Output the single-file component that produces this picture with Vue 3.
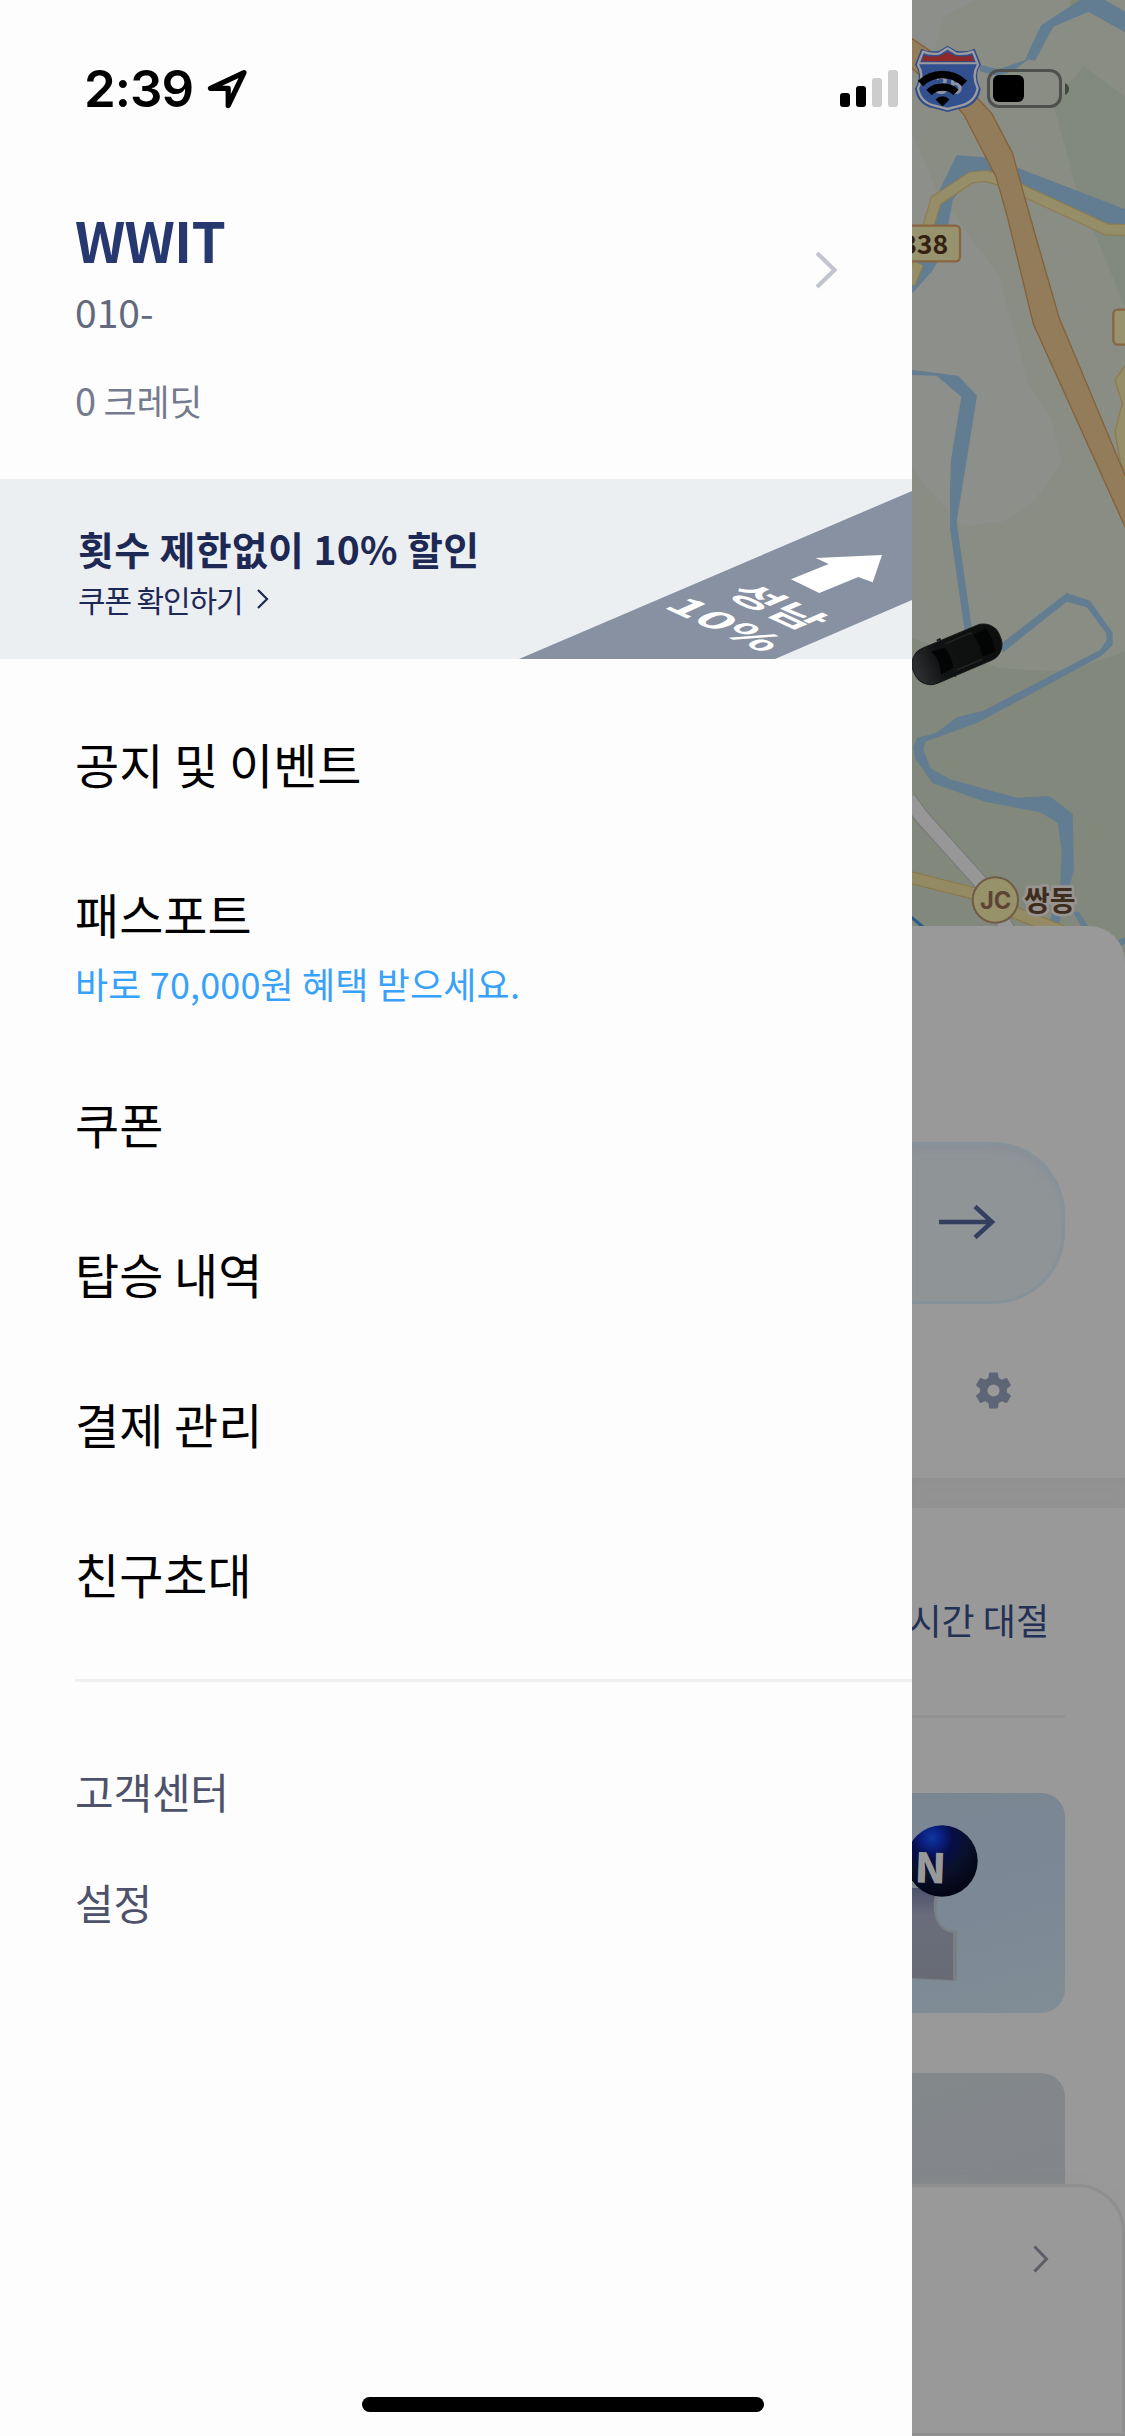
<script setup>
const menu = [
  { label: '공지 및 이벤트' },
  { label: '패스포트', note: '바로 70,000원 혜택 받으세요.' },
  { label: '쿠폰' },
  { label: '탑승 내역' },
  { label: '결제 관리' },
  { label: '친구초대' },
]
const support = ['고객센터', '설정']
const signal = [
  { h: 14, on: true },
  { h: 21, on: true },
  { h: 29, on: false },
  { h: 37, on: false },
]
</script>

<template>
  <div class="screen">
    <aside class="drawer">
      <header class="profile">
        <div class="who">
          <h1>WWIT</h1>
          <p class="phone">010-</p>
          <p class="credit"><span>0</span> 크레딧</p>
        </div>
        <svg class="go" width="26" height="40" viewBox="0 0 26 40" fill="none">
          <path d="M3 3 20.500 20 3 37" stroke="#c2c5cf" stroke-width="4.200" />
        </svg>
      </header>

      <section class="banner">
        <div class="banner-copy">
          <strong>횟수 제한없이 10% 할인</strong>
          <div class="banner-link">
            <span>쿠폰 확인하기</span>
            <svg width="14" height="22" viewBox="0 0 14 22" fill="none">
              <path d="M2 2 11 11 2 20" stroke="#1e2855" stroke-width="2.200" />
            </svg>
          </div>
        </div>
        <svg class="road" width="393" height="180" viewBox="519 0 393 180">
          <polygon points="519,180 912,12 912,121 775,180" fill="#8791a2" />
          <polygon points="815.7,79 882,76 872.7,103.3 858.3,98 819.3,114 791,100.300 828.700,85" fill="#fff" />
          <text class="road-text" font-size="38" transform="matrix(1.16 .54 -.96 .42 723 115)">성남</text>
          <text class="road-text" font-size="38" transform="matrix(1.25 .57 -.91 .42 662 128)">10%</text>
        </svg>
      </section>

      <nav class="menu">
        <div v-for="item in menu" :key="item.label" class="menu-item">
          <span class="label">{{ item.label }}</span>
          <span v-if="item.note" class="note">{{ item.note }}</span>
        </div>
      </nav>
      <nav class="support">
        <span v-for="s in support" :key="s">{{ s }}</span>
      </nav>
    </aside>

    <main class="behind">
      <svg class="map" width="213" height="962" viewBox="396 0 639 2886">
        <defs>
          <linearGradient id="car" x1="0" x2="1" y1="0" y2="0">
            <stop offset="0" stop-color="#303133" />
            <stop offset=".3" stop-color="#101213" />
            <stop offset="1" stop-color="#0c0e0d" />
          </linearGradient>
        </defs>
        <rect x="396" width="639" height="2886" fill="#898d84" />
        <path d="M396 0H590L490 50 465 150 396 160Z" fill="#8d8f8a" />
        <path d="M396 400 470 570 520 640 655 825 710 1020 745 1150 815 1260 845 1385 765 1500 670 1565 550 1578 430 1450 396 1400Z" fill="#8d8f8a" />
        <path d="M910 198 1035 290V920L890 570 820 310Z" fill="#82897d" />
        <path d="M870 0H910L900 18 870 25Z" fill="#7e8a71" />
        <path d="M396 1915 660 2005 860 2015 1035 1955V2886H396Z" fill="#82887b" />

        <g fill="#627d91">
          <path d="M900 0H975L1035 35V97L925 35 820 80 765 182 745 178 700 212 655 228 600 214V194L655 208 735 180 783 76Z" />
          <path d="M530 466 620 472 650 525 575 525 518 600 505 672 470 790 455 815 397 880V810L465 672 480 568Z" />
          <path d="M712 503 1035 628V680H980L722 560Z" />
          <path d="M396 1110 535 1127 591 1187 530 1565 576 1890 555 1900 510 1585 510 1460 513 1380 544 1190 470 1127 396 1125Z" />
          <path d="M665 1930 860 1779 930 1802 998 1898V1935L965 1967 590 2170 435 2225 430 2250 452 2305 510 2338 710 2393 808 2388 878 2442 882 2610 865 2670 832 2790H800L840 2670 845 2550 833 2468 780 2437 615 2405 458 2350 405 2275 400 2240 412 2213 470 2198 530 2152 610 2132 960 1950 980 1920 978 1898 920 1822 860 1805 668 1958Z" />
          <path d="M878 2735H897L925 2780H905Z" />
          <path d="M1010 2822 1035 2812V2832L1020 2836Z" />
        </g>

        <g fill="none">
          <path d="M390 850 415 790M445 680 468 602 574 532 620 528 690 550 735 575 980 688 1040 690" stroke="#8e7c4f" stroke-width="36" />
          <path d="M390 850 415 790M445 680 468 602 574 532 620 528 690 550 735 575 980 688 1040 690" stroke="#968e69" stroke-width="29" />
        </g>
        <path d="M1040 1090 1005 1140 1027 1210 1005 1295 1022 1390 1040 1420Z" fill="#968e69" stroke="#8e7c4f" stroke-width="4" />
        <path d="M390 112 450 152 590 292 635 340 697 458 725 560 770 720 838 955 1020 1390 1045 1450V1600L1035 1580 760 972 682 650 657 562 648 530 552 345 535 325 390 200Z" fill="#927c5a" stroke="#85613a" stroke-width="4" />

        <g fill="none" stroke-linejoin="round">
          <path d="M390 2632 580 2680 710 2740 850 2795" stroke="#8b7949" stroke-width="38" />
          <path d="M390 2632 580 2680 710 2740 850 2795" stroke="#948b64" stroke-width="31" />
          <path d="M385 2395 425 2450 600 2645 690 2800" stroke="#78797a" stroke-width="46" />
          <path d="M385 2395 425 2450 600 2645 690 2800" stroke="#979797" stroke-width="40" />
          <path d="M390 2748 440 2790" stroke="#2a5c87" stroke-width="9" />
        </g>

        <g stroke="#886640" stroke-width="7" fill="#98936f">
          <rect x="300" y="677" width="240" height="107" rx="13" />
          <rect x="1000" y="929" width="120" height="105" rx="13" />
        </g>
        <text x="505" y="763" class="map-text" font-size="80" text-anchor="end" fill="#352110">338</text>

        <circle cx="646" cy="2700" r="68" fill="#98926b" stroke="#725b46" stroke-width="6" />
        <text x="647" y="2726" class="map-text jc" font-size="71" text-anchor="middle" fill="#5c4533">JC</text>
        <text x="809" y="2734" class="map-text" font-size="84" text-anchor="middle" fill="#3e2c1d" stroke="#989491" stroke-width="16" stroke-linejoin="round" paint-order="stroke">쌍동</text>

        <!-- interstate shield -->
        <g stroke-linejoin="round">
          <path d="M503 137 528 152Q560 158 584 146L603 194Q580 224 602 266Q595 315 545 325L503 336 461 325Q412 315 405 266Q428 224 405 194L424 146Q446 158 478 152Z" fill="#324b8b" />
          <path d="M503 145 527 160Q555 165 579 155L594 194Q574 226 593 265Q585 307 542 317L503 327 464 317Q421 307 414 265Q434 226 414 194L429 155Q451 165 479 160Z" fill="#324f8e" stroke="#9b9ba0" stroke-width="7" />
          <path d="M432 166Q460 173 485 166L503 156 521 166Q546 173 575 166L581 184H426Z" fill="#8b292b" />
          <path d="M418 190H590" stroke="#9b9ba0" stroke-width="6" />
          <text x="506" y="282" class="map-text" font-size="72" text-anchor="middle" fill="#8d94a6">35</text>
        </g>

        <g transform="translate(531 1963) rotate(-23)">
          <path d="M-30-65V60M-40-62H-28" stroke="#111" stroke-width="5" />
          <rect x="-140" y="-57" width="280" height="114" rx="52" fill="url(#car)" stroke="#171819" stroke-width="3" />
          <path d="M-68-38Q-52 0-68 38L-25 32Q-18 0-25-32Z" fill="#030404" />
          <path d="M68-35Q76 0 68 35L108 38Q122 0 108-38Z" fill="#030404" />
          <path d="M-20-43H65M-20 43H65" stroke="#242726" stroke-width="4" />
        </g>
      </svg>

      <section class="sheet">
        <div class="pill">
          <svg width="58" height="36" viewBox="0 0 58 36" fill="none" stroke="#343f60" stroke-width="4.500">
            <path d="M0 18H54M36 2.500 53 18 36 33.500" />
          </svg>
        </div>
        <svg class="gear" width="43" height="43" viewBox="0 0 24 24" fill="#5e6577">
          <path d="M19.430 12.980c.04-.32.07-.64.07-.98s-.03-.66-.07-.98l2.110-1.650c.19-.15.24-.42.12-.64l-2-3.460c-.12-.22-.39-.3-.61-.22l-2.490 1c-.52-.4-1.080-.73-1.690-.98l-.38-2.650C14.460 2.180 14.250 2 14 2h-4c-.25 0-.46.18-.49.42l-.38 2.650c-.61.25-1.170.59-1.690.98l-2.490-1c-.23-.09-.49 0-.61.22l-2 3.460c-.13.22-.07.49.12.64l2.110 1.650c-.04.32-.07.65-.07.98s.03.66.07.98l-2.110 1.650c-.19.15-.24.42-.12.64l2 3.460c.12.22.39.3.61.22l2.490-1c.52.4 1.080.73 1.690.98l.38 2.650c.03.24.24.42.49.42h4c.25 0 .46-.18.49-.42l.38-2.650c.61-.25 1.170-.59 1.690-.98l2.490 1c.23.09.49 0 .61-.22l2-3.460c.12-.22.07-.49-.12-.64l-2.110-1.650zM12 15.400a3.400 3.400 0 1 1 0-6.800 3.400 3.400 0 0 1 0 6.800z" />
        </svg>
      </section>
      <div class="gap"></div>
      <section class="promos">
        <p class="tab">시간 대절</p>
        <div class="card">
          <svg width="153" height="220" viewBox="0 0 153 220">
            <defs>
              <radialGradient id="ball" cx=".36" cy=".17" r=".85">
                <stop offset="0" stop-color="#10389a" />
                <stop offset=".14" stop-color="#0b2488" />
                <stop offset=".34" stop-color="#060d49" />
                <stop offset=".6" stop-color="#0a112b" />
                <stop offset="1" stop-color="#020412" />
              </radialGradient>
              <linearGradient id="body" x1="0" x2="0" y1="0" y2="1">
                <stop offset="0" stop-color="#4c536c" />
                <stop offset=".3" stop-color="#696d7b" />
                <stop offset="1" stop-color="#686b75" />
              </linearGradient>
            </defs>
            <path d="M0 95H29C20 118 24 137 45 138V187L41 188 0 186Z" fill="#7b7e83" />
            <path d="M0 95H25C17 118 24 138 41 140V187L0 185Z" fill="url(#body)" />
            <circle cx="30" cy="68" r="35.700" fill="url(#ball)" />
            <text x="18.500" y="90" class="ball-n" font-size="41" text-anchor="middle" transform="rotate(2 18 75)">N</text>
          </svg>
        </div>
        <div class="card second"></div>
      </section>
      <section class="bottom">
        <svg width="18" height="30" viewBox="0 0 18 30" fill="none">
          <path d="M2.500 2.500 14.500 15 2.500 27.500" stroke="#5d5e69" stroke-width="3" />
        </svg>
      </section>
    </main>

    <div class="status">
      <span class="time">2:39</span>
      <svg class="loc" width="42" height="42" viewBox="206 69 42 42">
        <path d="M244 72.700 210.500 88.400H228.200V105.600Z" fill="none" stroke="#000" stroke-width="5.200" stroke-linejoin="round" />
      </svg>
      <div class="signal">
        <i v-for="b in signal" :key="b.h" :class="{ on: b.on }" :style="{ height: b.h + 'px' }"></i>
      </div>
      <svg class="wifi" width="52" height="38" viewBox="916 69 52 38" fill="none" stroke="#000" stroke-width="7.500">
        <path d="M920.500 83.500A31.500 31.500 0 0 1 964.500 83.500" />
        <path d="M929 92.500A19.500 19.500 0 0 1 956 92.500" />
        <path d="M935.500 99.500Q942.500 93 949.500 99.500L942.500 106.500Z" fill="#000" stroke="none" />
      </svg>
      <div class="battery"><b></b></div>
      <svg class="nub" width="5" height="12" viewBox="0 0 5 12"><path d="M0 0Q4 2 4 6T0 12Z" fill="#454644" /></svg>
    </div>
    <div class="home"></div>
  </div>
</template>

<style>
body {
  margin: 0;
}
</style>

<style scoped>
.screen {
  position: relative;
  display: flex;
  width: 1125px;
  height: 2436px;
  overflow: hidden;
  font-family: 'Noto Sans CJK KR', 'Noto Sans CJK SC', sans-serif;
  background: #999;
}
h1,
p {
  margin: 0;
}
.drawer {
  flex: none;
  width: 912px;
  background: #fdfdfd;
}
.profile {
  box-sizing: border-box;
  display: flex;
  justify-content: space-between;
  height: 479px;
  padding: 194px 72px 0 75px;
}
.who h1 {
  font-size: 55px;
  line-height: 90px;
  font-weight: 700;
  letter-spacing: -0.8px;
  color: #273871;
}
.phone {
  margin-top: -1px;
  font-size: 39px;
  line-height: 56px;
  color: #62697d;
}
.credit {
  margin-top: 33px;
  font-size: 36px;
  line-height: 56px;
  letter-spacing: -0.3px;
  color: #757b8e;
}
.credit span {
  font-size: 38px;
}
.go {
  margin-top: 56px;
}
.banner {
  display: flex;
  justify-content: space-between;
  height: 180px;
  background: #ebeff2;
}
.banner-copy {
  padding: 42px 0 0 78px;
  color: #1e2855;
}
.banner-copy strong {
  display: block;
  font-size: 39px;
  line-height: 54px;
  font-weight: 700;
  letter-spacing: 0.3px;
  white-space: nowrap;
}
.banner-link {
  display: flex;
  align-items: center;
  gap: 13px;
  margin-top: 1px;
  font-size: 30px;
  line-height: 46px;
  letter-spacing: -1.1px;
}
.road {
  flex: none;
}
.road-text {
  font-family: 'Noto Sans CJK KR', sans-serif;
  font-weight: 700;
  fill: #fff;
}
.menu {
  display: flex;
  flex-direction: column;
  gap: 80px;
  margin-left: 75px;
  padding: 69px 0 71px;
  border-bottom: 3px solid #f0f0f1;
}
.menu-item {
  display: flex;
  flex-direction: column;
}
.label {
  font-size: 48px;
  line-height: 70px;
  color: #000;
}
.note {
  padding-top: 10px;
  font-size: 36px;
  line-height: 50px;
  letter-spacing: 0.15px;
  color: #38a2fb;
}
.support {
  display: flex;
  flex-direction: column;
  gap: 51px;
  padding: 79px 0 0 75px;
  font-size: 42px;
  line-height: 60px;
  letter-spacing: -0.2px;
  color: #4d526a;
}
.behind {
  width: 213px;
  height: 2436px;
  overflow: hidden;
  display: flex;
  flex-direction: column;
  background: #999;
}
.behind > * {
  flex: none;
}
.map {
  display: block;
}
.map-text {
  font-family: 'Noto Sans CJK KR', sans-serif;
  font-weight: 700;
}
.jc {
  font-family: 'Inter', sans-serif;
}
.sheet {
  box-sizing: border-box;
  height: 552px;
  margin-top: -36px;
  padding-top: 216px;
  z-index: 1;
  background: #999;
  border-top-right-radius: 36px;
}
.pill {
  box-sizing: border-box;
  display: flex;
  align-items: center;
  width: 153px;
  height: 162px;
  padding: 0 0 3px 27px;
  border: 3px solid #86929a;
  border-left: 0;
  border-radius: 0 72px 72px 0;
  background: #8f9597;
  box-shadow: inset 0 9px 9px -3px #8a8f96;
}
.gear {
  display: block;
  margin: 65px 0 0 59.5px;
}
.gap {
  height: 30px;
  background: #939393;
  box-shadow: inset 0 2px 8px #8f8f8f;
}
.promos {
  display: flex;
  flex-direction: column;
  height: 676px;
  overflow: hidden;
}
.promos > * {
  flex: none;
}
.tab {
  width: 153px;
  box-sizing: border-box;
  display: flex;
  justify-content: flex-end;
  height: 210px;
  padding: 83px 16px 0 0;
  border-bottom: 3px solid #929292;
  font-size: 36px;
  line-height: 56px;
  white-space: nowrap;
  color: #243156;
}
.card {
  width: 153px;
  height: 220px;
  margin-top: 75px;
  border-radius: 0 24px 24px 0;
  background: linear-gradient(165deg, #7a8692, #7c8895 50%, #808d96);
  overflow: hidden;
}
.card svg {
  display: block;
}
.card.second {
  margin-top: 60px;
  background: linear-gradient(160deg, #83888b, #838488);
}
.ball-n {
  font-family: 'Noto Sans CJK KR', sans-serif;
  font-weight: 900;
  fill: #999;
}
.bottom {
  box-sizing: border-box;
  height: 252px;
  padding: 57px 0 0 120px;
  border: 3px solid #8f8f8f;
  border-left: 0;
  border-top-right-radius: 48px;
  background: #999;
  box-shadow: 0 -3px 8px #9494944d;
}
.status {
  position: absolute;
  top: 69px;
  left: 0;
  display: flex;
  align-items: flex-start;
  width: 1125px;
  height: 39px;
  z-index: 2;
}
.time {
  width: 122px;
  padding-left: 84px;
  font-family: 'Inter', sans-serif;
  font-size: 51px;
  line-height: 39px;
  font-weight: 600;
  letter-spacing: -1px;
  color: #000;
}
.signal {
  display: flex;
  align-items: flex-end;
  gap: 6px;
  height: 38px;
  margin-left: 592px;
}
.signal i {
  width: 10px;
  border-radius: 3px;
  background: #cdcdcd;
}
.signal i.on {
  background: #000;
}
.wifi {
  margin-left: 18px;
}
.battery {
  box-sizing: border-box;
  width: 75px;
  height: 39px;
  margin-left: 19px;
  padding: 3px;
  border: 3px solid #4f504e;
  border-radius: 12px;
}
.battery b {
  display: block;
  width: 31px;
  height: 27px;
  border-radius: 6px;
  background: #000;
}
.nub {
  margin: 14px 0 0 3px;
}
.home {
  position: absolute;
  left: 362px;
  top: 2397px;
  width: 402px;
  height: 15px;
  border-radius: 8px;
  background: #000;
  z-index: 2;
}
</style>
